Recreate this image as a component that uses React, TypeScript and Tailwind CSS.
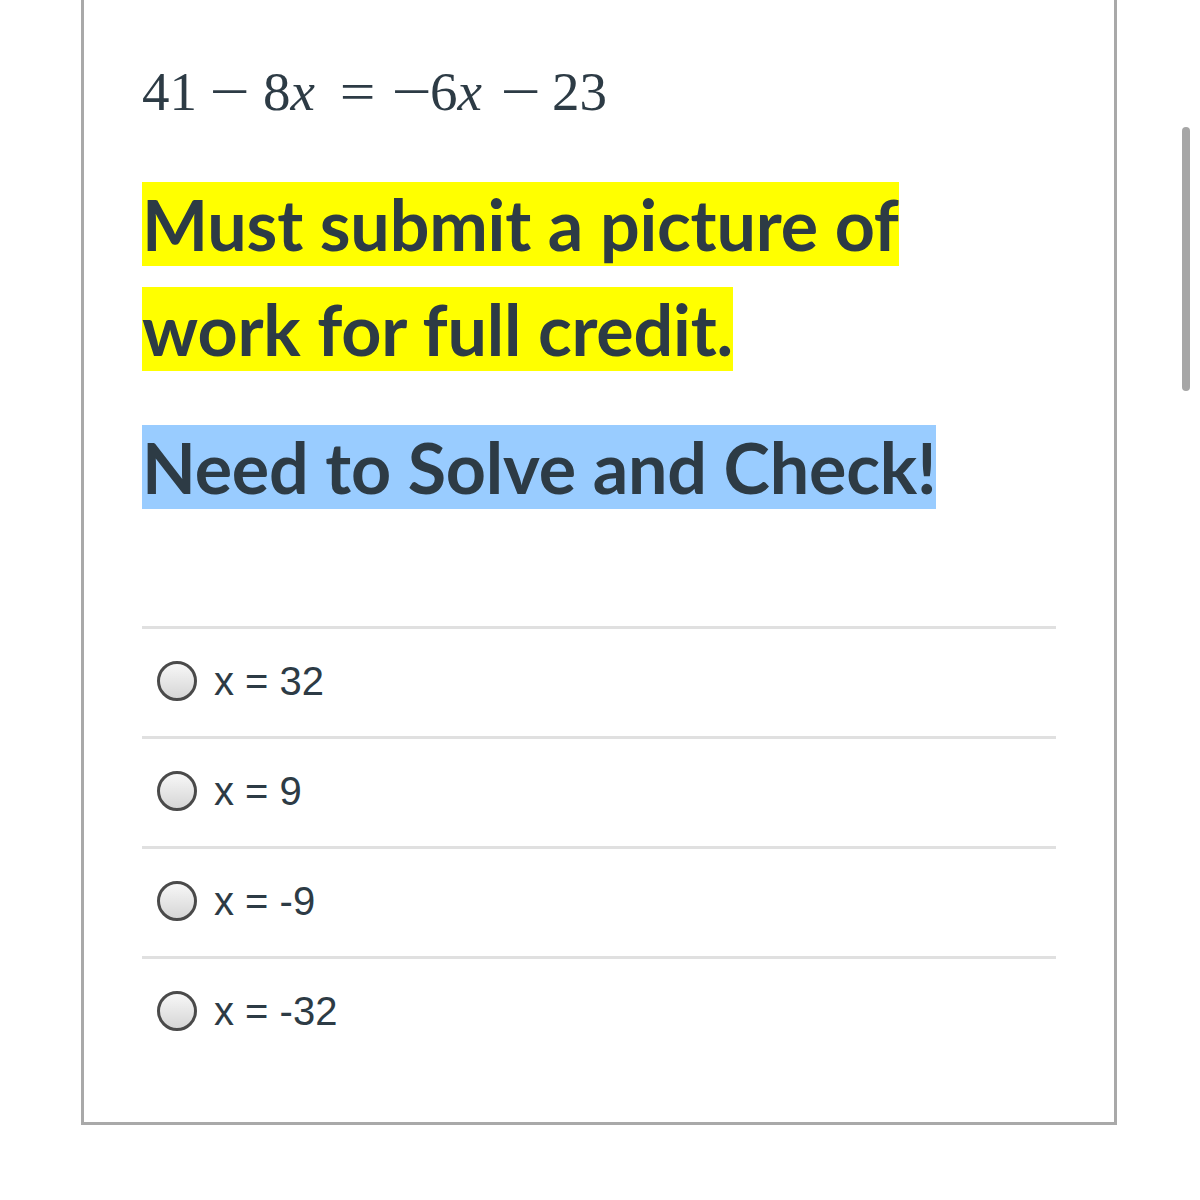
import React from 'react';

const options = ['x = 32', 'x = 9', 'x = -9', 'x = -32'];

const Radio: React.FC = () => (
    <span className="inline-block h-[40px] w-[40px] shrink-0 rounded-full border-[3px] border-[#4a4a4a] bg-gradient-to-b from-[#f7f7f7] to-[#d6d6d6]" />
);

export const App: React.FC = () => {
    return (
        <div className="relative min-h-[1200px] w-[1200px] bg-white">
            <div className="ml-[81px] w-[1036px] border-x-[3px] border-b-[3px] border-[#a9a9a9] px-[58px] pt-[60px] pb-[56px]">
                {/* equation, operators widened like the math font */}
                <p
                    className="text-[55px] leading-[64px] whitespace-nowrap text-[#2d3b45]"
                    style={{ fontFamily: '"Liberation Serif", serif' }}
                >
                    41
                    <span className="ml-[17px] mr-[18px] inline-block scale-x-[1.3]">−</span>
                    8<i>x</i>
                    <span className="ml-[27px] inline-block scale-x-[1.15]">=</span>
                    <span className="ml-[23px] mr-[3px] inline-block scale-x-[1.3]">−</span>
                    6<i className="pr-[2px]">x</i>
                    <span className="ml-[21px] mr-[16px] inline-block scale-x-[1.3]">−</span>
                    23
                </p>

                <div
                    className="mt-[48px] text-[70px] font-bold leading-[105px] tracking-[-0.2px] text-[#2d3b45]"
                    style={{ fontFamily: 'Lato, sans-serif' }}
                >
                    <p className="w-[800px]">
                        <span className="bg-[#ffff00]">Must submit a picture of work for full credit.</span>
                    </p>
                    <p className="mt-[33px]">
                        <span className="bg-[#99ccff]">Need to Solve and Check!</span>
                    </p>
                </div>

                <div className="mt-[106px]" style={{ fontFamily: '"Liberation Sans", sans-serif' }}>
                    {options.map((o) => (
                        <div key={o} className="flex h-[110px] items-center gap-[17px] border-t-[3px] border-[#e0e0e0] pb-[4px] pl-[15px]">
                            <Radio />
                            <span className="text-[40px] text-[#2d3b45]">{o}</span>
                        </div>
                    ))}
                </div>
            </div>

            <div className="absolute left-[1182px] top-[127px] h-[264px] w-[8px] rounded-full bg-[#a6a6a6]" />
        </div>
    );
};

export default App;
